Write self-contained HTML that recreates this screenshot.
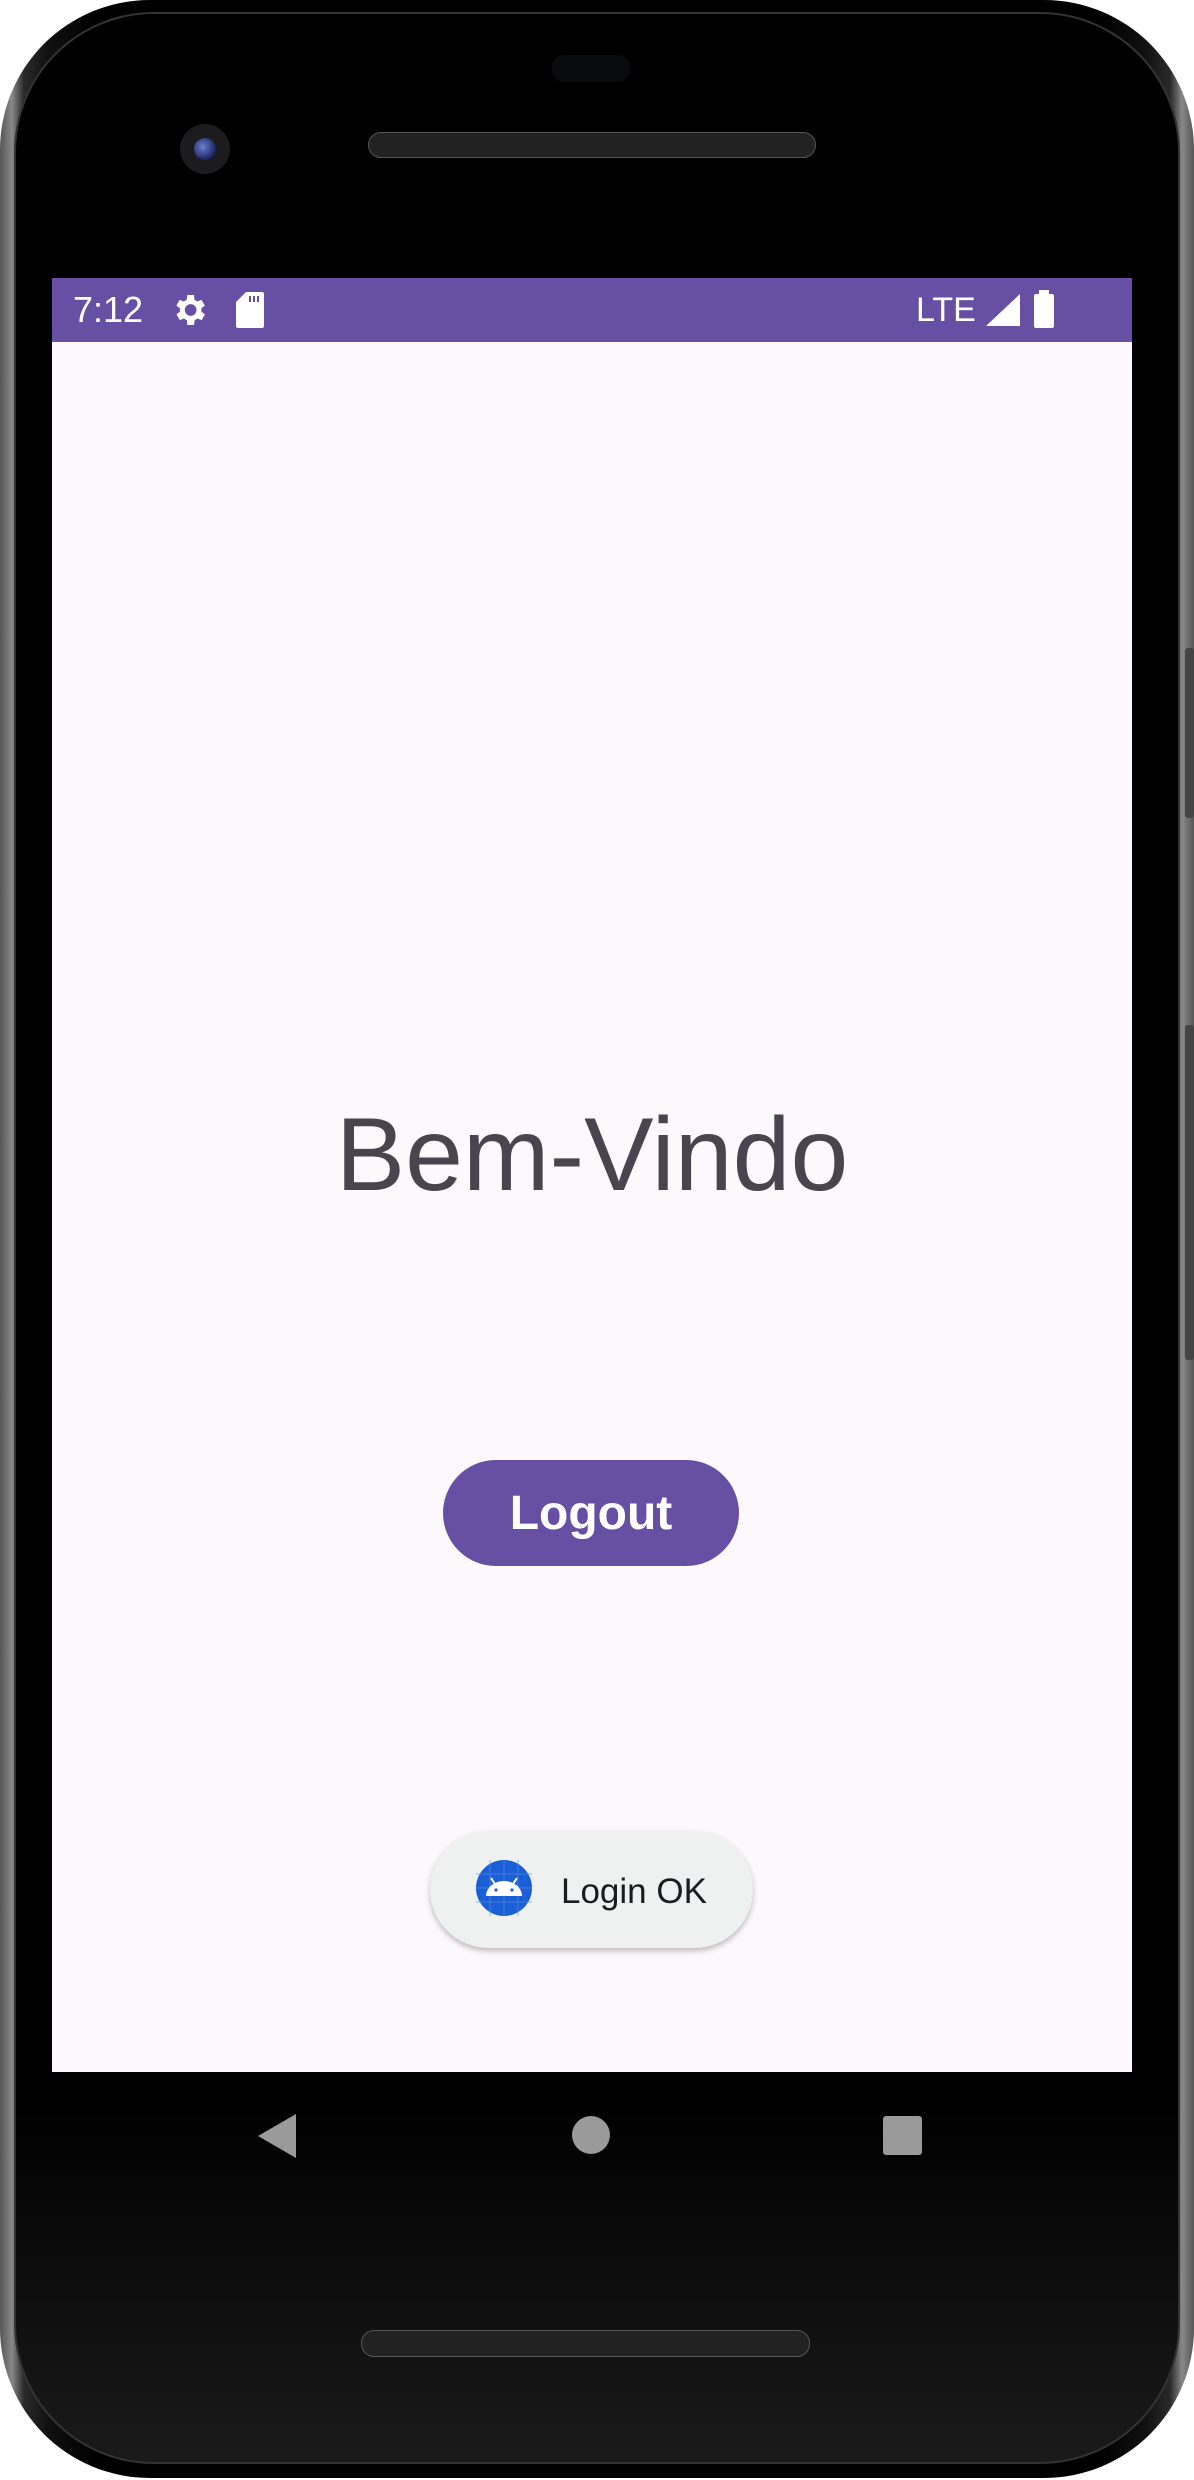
<!DOCTYPE html>
<html><head><meta charset="utf-8">
<style>
html,body{margin:0;padding:0;background:#fff;}
body{width:1194px;height:2480px;position:relative;overflow:hidden;font-family:"Liberation Sans",sans-serif;}
.phone{position:absolute;left:0;top:0;width:1194px;height:2478px;border-radius:150px;background:linear-gradient(90deg,#555,#888 1%,#2a2a2a 2%,#111 4%,#000 8%,#000 92%,#111 96%,#2a2a2a 98%,#888 99%,#555);}
.inner{position:absolute;left:14px;top:12px;right:14px;bottom:14px;border-radius:140px;background:linear-gradient(180deg,#000 0%,#000 85%,#1a1a1a 100%);border:2px solid #333;}
.screen{position:absolute;left:52px;top:278px;width:1080px;height:1794px;background:#fdf8fc;}
.status{position:absolute;left:0;top:0;width:1080px;height:64px;background:#6750a4;color:#fff;font-size:36px;}
.abs{position:absolute;}
</style></head><body>
<div class="phone"><div class="inner"></div></div>
<div class="abs" style="left:1185px;top:648px;width:9px;height:170px;background:#444;border-radius:3px"></div>
<div class="abs" style="left:1185px;top:1025px;width:9px;height:335px;background:#444;border-radius:3px"></div>
<div class="abs" style="left:552px;top:55px;width:78px;height:27px;border-radius:12px;background:#0a0b0e"></div>
<div class="abs" style="left:180px;top:124px;width:50px;height:50px;border-radius:50%;background:#1c1c1e"></div>
<div class="abs" style="left:194px;top:138px;width:22px;height:22px;border-radius:50%;background:radial-gradient(circle at 40% 40%,#6b7fd0,#1a2460 70%)"></div>
<div class="abs" style="left:368px;top:132px;width:448px;height:26px;border-radius:13px;background:#222;border:1px solid #555;box-sizing:border-box"></div>
<div class="abs" style="left:361px;top:2330px;width:449px;height:27px;border-radius:13px;background:#222;border:1px solid #555;box-sizing:border-box"></div>

<div class="screen">
 <div class="status">
  <div class="abs" style="left:21px;top:12px;line-height:40px">7:12</div>
  <svg class="abs" style="left:117px;top:12px" width="40" height="40" viewBox="0 0 24 24"><path fill="#fff" d="M19.4 13a7.5 7.5 0 0 0 0-2l2.1-1.6-2-3.5-2.5 1a7 7 0 0 0-1.7-1L15 3h-4l-.4 2.9a7 7 0 0 0-1.7 1l-2.5-1-2 3.5L6.6 11a7.5 7.5 0 0 0 0 2l-2.1 1.6 2 3.5 2.5-1a7 7 0 0 0 1.7 1L11 21h4l.4-2.9a7 7 0 0 0 1.7-1l2.5 1 2-3.5zM13 15.5a3.5 3.5 0 1 1 0-7 3.5 3.5 0 0 1 0 7z"/></svg>
  <svg class="abs" style="left:184px;top:14px" width="28" height="36" viewBox="0 0 14 18"><path fill="#fff" d="M5 0h8a1 1 0 0 1 1 1v16a1 1 0 0 1-1 1H1a1 1 0 0 1-1-1V5z"/><path stroke="#6750a4" stroke-width="1" d="M7 2v3M9 2v3M11 2v3"/></svg>
  <div class="abs" style="left:864px;top:12px;line-height:40px;font-size:34px">LTE</div>
  <svg class="abs" style="left:934px;top:16px" width="34" height="32"><path fill="#fff" d="M34 0V32H0z"/></svg>
  <div class="abs" style="left:982px;top:16px;width:20px;height:34px;background:#fff;border-radius:2px"></div>
  <div class="abs" style="left:987px;top:12px;width:10px;height:5px;background:#fff"></div>
 </div>
 <div class="abs" style="left:0;width:1080px;top:812px;text-align:center;font-size:104px;color:#49454f;line-height:130px">Bem-Vindo</div>
 <div class="abs" style="left:391px;top:1182px;width:296px;height:106px;border-radius:53px;background:#6750a4;color:#fff;font-weight:bold;font-size:48px;text-align:center;line-height:108px">Logout</div>
 <div class="abs" style="left:378px;top:1553px;width:323px;height:117px;border-radius:59px;background:#eff0f0;box-shadow:0 3px 6px rgba(0,0,0,.25)"></div>
 <svg class="abs" style="left:424px;top:1582px" width="56" height="56" viewBox="0 0 56 56"><circle cx="28" cy="28" r="28" fill="#1a5fd6"/><g stroke="#5b8ee6" stroke-width="1" opacity=".6"><path d="M0 14H56M0 28H56M0 42H56M14 0V56M28 0V56M42 0V56"/></g><path fill="#fff" d="M10 36a18 15 0 0 1 36 0z"/><path stroke="#fff" stroke-width="2" d="M15 18l4 6M41 18l-4 6"/><circle cx="20" cy="30" r="1.6" fill="#1a5fd6"/><circle cx="36" cy="30" r="1.6" fill="#1a5fd6"/></svg>
 <div class="abs" style="left:509px;top:1590px;font-size:35px;color:#1c1b1f;line-height:48px">Login OK</div>
</div>
<svg class="abs" style="left:258px;top:2114px" width="40" height="44"><path fill="#9a9a9a" d="M38 0V44L0 22z"/></svg>
<div class="abs" style="left:572px;top:2116px;width:38px;height:38px;border-radius:50%;background:#9a9a9a"></div>
<div class="abs" style="left:883px;top:2116px;width:39px;height:39px;border-radius:3px;background:#9a9a9a"></div>
</body></html>
